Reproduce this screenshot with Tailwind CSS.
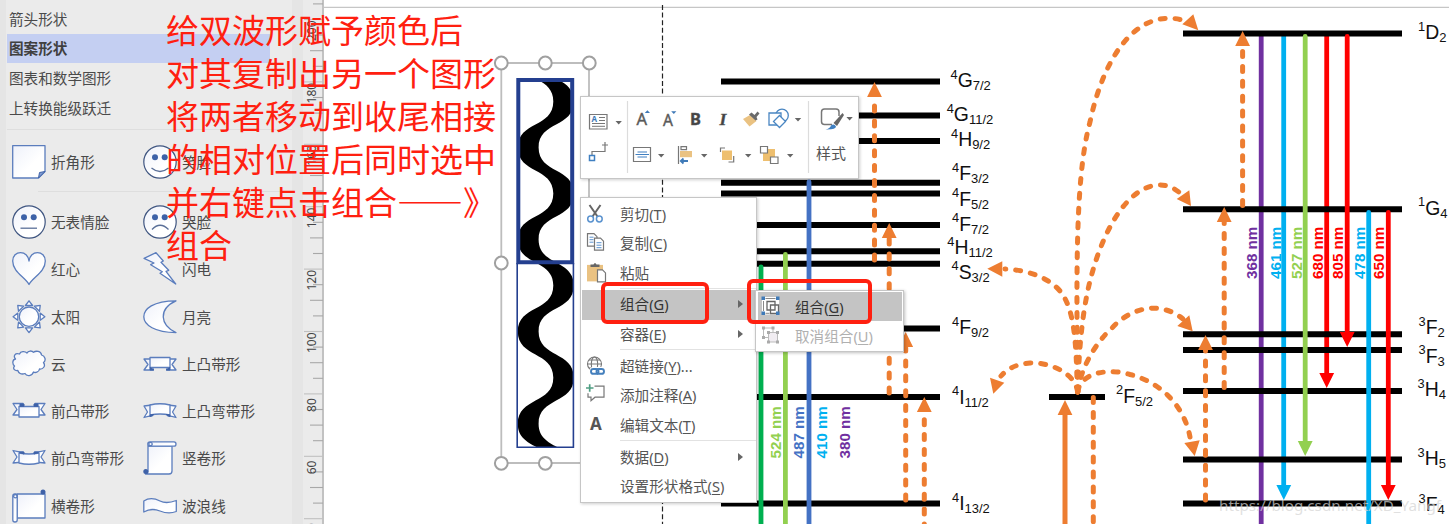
<!DOCTYPE html>
<html lang="zh-CN">
<head>
<meta charset="utf-8">
<title>Shapes editor</title>
<script src="https://cdn.jsdelivr.net/npm/@tailwindcss/browser@4"></script>
</head>
<body class="bg-white">
<main class="relative flex h-[524px] w-[1449px] overflow-hidden bg-white font-['Noto_Sans','Noto_Sans_CJK_SC',sans-serif] text-[14.6px] text-[#4a4a4a]">

  <!-- shape library -->
  <aside class="w-[303px] shrink-0 bg-[#e5e5e5] pl-[6px] pr-[11px]">
    <div class="h-full bg-[#ebebeb] pt-[5px] pl-px">
      <ul class="leading-[29px] whitespace-nowrap">
        <li class="h-[29px] pl-[2px]">箭头形状</li>
        <li class="h-[29px] w-[263px] bg-[#c4cff2] pl-[2px] font-bold text-[#404040]">图案形状</li>
        <li class="mt-px h-[29px] pl-[2px]">图表和数学图形</li>
        <li class="h-[30px] pl-[2px] leading-[30px]">上转换能级跃迁</li>
      </ul>
      <div class="mt-[6px] h-px bg-[#dedede]"></div>
      <div id="shapes" class="grid grid-cols-[131px_1fr] auto-rows-[47.3px] pl-[5px] whitespace-nowrap"></div>
    </div>
  </aside>

  <!-- vertical ruler -->
  <div class="w-[21px] shrink-0 bg-[#ebebeb]">
    <svg id="ruler" width="21" height="524" viewBox="303 0 21 524"></svg>
  </div>

  <!-- drawing canvas -->
  <section class="w-[1125px] shrink-0">
    <svg width="1125" height="524" viewBox="324 0 1125 524" font-family="Liberation Sans, Arial, sans-serif">
      <path d="M324 7.3H1449" stroke="#c6c6c6" stroke-width="1.2"/>
      <path d="M662.5 5V524" stroke="#222" stroke-width="1.2" stroke-dasharray="5 2.6"/>
      <path d="M501.3 63H589V463H501.3Z" fill="none" stroke="#bdbdbd" stroke-width="1.8"/>
      <clipPath id="wc"><path d="M517 80H574V447H517Z"/></clipPath>
      <g clip-path="url(#wc)">
        <path d="M517.8 55.5C517.8 82 553.3 75 553.3 101.5C553.3 128 517.8 121 517.8 147.5C517.8 174 553.3 167 553.3 193.5C553.3 220 517.8 213 517.8 239.5C517.8 266 553.3 259 553.3 285.5C553.3 312 517.8 305 517.8 331.5C517.8 358 553.3 351 553.3 377.7C553.3 404 517.8 397 517.8 423.7C517.8 450 553.3 443 553.3 469.7H573.8C573.8 443 538.6 450 538.6 423.7C538.6 397 573.8 404 573.8 377.7C573.8 351 538.6 358 538.6 331.5C538.6 305 573.8 312 573.8 285.5C573.8 259 538.6 266 538.6 239.5C538.6 213 573.8 220 573.8 193.5C573.8 167 538.6 174 538.6 147.5C538.6 121 573.8 128 573.8 101.5C573.8 75 538.6 82 538.6 55.5Z"/>
      </g>
      <path d="M517.2 263V447.2H573.4V263" fill="none" stroke="#243f8f" stroke-width="1.6"/>
      <path d="M518.3 80H572.2V262.2H518.3Z" fill="none" stroke="#243f8f" stroke-width="4"/>
      <g fill="#fff" stroke="#a0a0a0" stroke-width="2">
        <circle cx="501.3" cy="63" r="6.4"/><circle cx="545.3" cy="63" r="6.4"/><circle cx="589.3" cy="63" r="6.4"/>
        <circle cx="501.3" cy="263" r="6.4"/><circle cx="501.3" cy="463.3" r="6.4"/><circle cx="545.3" cy="463.3" r="6.4"/>
      </g>

      <g stroke-width="4.8" fill="none">
        <path d="M1261.2 36V524" stroke="#7030a0"/>
        <path d="M1283.7 36V488" stroke="#00b0f0"/>
        <path d="M1326.7 36V376" stroke="#f00"/>
      </g>
      <g id="levels" stroke="#000" stroke-width="6"></g>
      <g stroke-width="4.8" fill="none" stroke-linecap="round">
        <path d="M761 267V530" stroke="#00b050"/>
        <path d="M785.4 254.5V530" stroke="#92d050"/>
        <path d="M809 182V530" stroke="#4472c4"/>
        <path d="M1305.2 36.500V444" stroke="#92d050"/>
        <path d="M1347.2 36.500V335" stroke="#f00"/>
        <path d="M1368.7 212.500V530" stroke="#00b0f0"/>
        <path d="M1388.3 212.500V488" stroke="#f00"/>
      </g>
      <path d="M1276.400 485h14.800l-7.400 15z" fill="#00b0f0"/>
      <path d="M1297.800 441h14.800l-7.400 15z" fill="#92d050"/>
      <path d="M1319.300 373h14.800l-7.400 15z M1339.800 332h14.800l-7.400 15z M1380.900 485h14.800l-7.400 15z" fill="#f00"/>

      <g fill="none" stroke="#ed7d31" stroke-width="5" stroke-linecap="round" stroke-dasharray="5 9.9">
        <path d="M874.5 260V98"/><path d="M889.2 393V239"/><path d="M905.7 500V348"/><path d="M924.3 529V412"/>
        <path d="M1093.300 397.500V530"/>
        <path d="M1242.600 205.500V46"/><path d="M1224.200 387.500V222"/><path d="M1205.500 500V350"/>
        <path d="M1077.500 392C1077 290 1074 180 1090 122C1104 55 1138 6 1186 21"/>
        <path d="M1077.800 392C1079 340 1084 300 1093 270C1106 225 1130 185 1160 185C1168 185 1174 188 1180 193"/>
        <path d="M1077.800 392C1080 370 1095 343 1112 328C1130 308 1160 300 1183 319"/>
        <path d="M1077.800 392C1080 372 1110 368 1130 374.500C1160 382 1184 405 1190 437"/>
        <path d="M1077.800 392C1074 370 1045 362 1030 363C1015 364 1006 370 1001 376"/>
        <path d="M1077.500 392C1076 350 1076 310 1060 291C1047 276 1025 270 1005 269"/>
      </g>
      <path d="M1065 524V412" stroke="#ed7d31" stroke-width="5"/>
      <g fill="#ed7d31">
        <path d="M867.100 97h14.800l-7.400-15z M881.800 238h14.800l-7.400-15z M898.300 347h14.800l-7.400-15z M916.900 412h14.800l-7.400-15z M1057.600 415h14.800l-7.400-15z M1235.200 46h14.800l-7.400-15z M1216.800 222h14.800l-7.400-15z M1198.100 350h14.800l-7.400-15z"/>
        <path d="M1193.300 14.300L1198.300 30.300L1182.300 24.300Z M1189.300 190.300L1191 206L1176.700 199Z M1189.300 315.300L1192.700 331.300L1177.300 326Z M1199.700 440.300L1194.700 456L1184.300 443Z M990 377.700L1004.300 382.700L993.300 393.700Z M987.300 268.700L1002.300 261.300V276.700Z"/>
      </g>
      <g id="terms" font-size="19.400" fill="#111"></g>
      <g id="waves" font-size="15.200" font-weight="bold"></g>
      <text x="1219" y="511" font-family="Noto Sans, sans-serif" font-size="15.200" fill="#d4d4d4" fill-opacity=".72" textLength="222" lengthAdjust="spacingAndGlyphs">https://blog.csdn.net/XD_Yangf</text>
    </svg>
  </section>

  <!-- annotation -->
  <p class="absolute top-[8px] left-[166px] font-['Noto_Sans_CJK_SC',sans-serif] text-[33px] leading-[43px] whitespace-pre text-[#ff2010]">给双波形赋予颜色后
对其复制出另一个图形
将两者移动到收尾相接
的相对位置后同时选中
并右键点击组合——》
组合</p>

  <!-- mini toolbar -->
  <div class="absolute top-[96px] left-[580px] h-[83px] w-[279px] border border-[#c6c6c6] bg-white shadow-[1px_1px_3px_rgba(0,0,0,0.2)]">
    <svg width="277" height="81" viewBox="581 97 277 81" fill="none" stroke-width="1.2">
      <path d="M627.500 101V173M808.500 101V173" stroke="#dcdcdc"/>
      <g fill="#666"><path d="M615.500 121h6.400l-3.200 3.400z M794.800 118h6.400l-3.200 3.400z M846.400 117h6.400l-3.200 3.400z M658 154h6.400l-3.200 3.400z M701 154h6.400l-3.200 3.400z M745 154h6.400l-3.200 3.400z M787 154h6.400l-3.200 3.400z"/></g>
      <g stroke="#777"><path d="M589.500 114.500h17.500v14.500h-17.500z"/><path d="M599 117.500h6M599 120.500h6M592 123.500h13M592 126.300h13" stroke-width="1"/></g>
      <text x="591.500" y="122" font-size="8" font-weight="bold" fill="#3f7ab8" font-family="Noto Sans">A</text>
      <path d="M592 155V151.500H605V147.500M605 142v6M602 145h6" stroke="#777"/><path d="M589.500 155.500h5v5h-5z" stroke="#3f7fc1" stroke-width="1.500"/>
      <g font-family="Noto Sans" fill="#5a5a5a" stroke="#5a5a5a" stroke-width=".4">
        <text x="636.500" y="125" font-size="16.500">A</text><text x="663" y="126" font-size="15.500">A</text>
        <text x="690" y="125" font-size="16.500" font-weight="bold" fill="#444">B</text>
        <text x="719.500" y="125" font-size="17.500" font-weight="bold" font-style="italic" font-family="Liberation Serif" fill="#444">I</text>
      </g>
      <path d="M644.800 113h5.200l-2.600-2.800z M671.200 111.200h5.200l-2.600 2.800z" fill="#3f7ab8"/>
      <path d="M743 119L750 115L756.500 121L749.500 126.500Z" fill="#eac282"/><path d="M749 114.500L751.500 112.500L754.500 115L757.500 111.500L759.500 113.500L756.500 117L757.500 119.500L755.500 120.500Z" fill="#6a6a6a"/>
      <g stroke="#4a86c2" stroke-width="1.300" fill="#fff"><circle cx="782" cy="115.500" r="6.300"/><path d="M769 113h12v12h-12z"/><path d="M779.500 115.500l6 6l-6 6l-6-6z"/></g>
      <path d="M832 124.500H824.500Q821.500 124.500 821.500 121.500V112Q821.500 109 824.500 109H836Q839 109 839 112V116" stroke="#777" stroke-width="1.500"/>
      <path d="M842.500 113L844 115L837 126L833.500 123Z" fill="#666"/><path d="M825.500 129.500Q830 128.500 831 125.500Q834 123 836 126.500Q836 129.800 825.500 129.500Z" fill="#3f7fc1"/>
      <path d="M633.500 147.500h17v14h-17z" stroke="#777"/><path d="M637.500 152h9.500M635.500 154.500h13.500M637.500 157h9.500" stroke="#3f7fc1"/>
      <path d="M678.500 146V164M681 146.700h5.500v3h-5.500z" stroke="#777"/><path d="M680 151h12v6.200h-12z" fill="#eac282"/><path d="M688 161h-6M683.500 158.500l-2.700 2.500l2.700 2.500" stroke="#3f7ab8" stroke-width="1.800"/>
      <path d="M722 150.500h10v9.500h-10z" fill="#eebf6f"/><path d="M720.500 152V148h4.500M728.500 162h5.200V156" stroke="#777"/>
      <path d="M763 149h12v12h-12z" fill="#eebf6f"/><path d="M760.500 146.500h7v6.500h-7z M770.500 157h7.500v6.500h-7.500z" stroke="#777" fill="#fff"/>
    </svg>
    <span class="absolute top-[46px] left-[235px] text-[15px] leading-[20px] text-[#555]">样式</span>
  </div>

  <!-- context menu -->
  <nav class="absolute top-[197px] left-[580px] flex h-[306px] w-[177px] flex-col border border-[#c6c6c6] bg-white pt-[2px] pl-px leading-[29px] whitespace-nowrap text-[#555] shadow-[1px_1px_3px_rgba(0,0,0,0.2)]">
    <div class="flex h-[29.3px]"><svg class="w-[38px]" viewBox="582 200 38 29.300" fill="none"><path d="M589.500 205L597.500 216.500M600.500 205L592.500 216.500" stroke="#666" stroke-width="2"/><circle cx="590.600" cy="219" r="2.900" stroke="#5b93cf" stroke-width="1.500"/><circle cx="599.300" cy="219" r="2.900" stroke="#5b93cf" stroke-width="1.500"/></svg>剪切(<u class="underline-offset-2">T</u>)</div>
    <div class="flex h-[29.3px]"><svg class="w-[38px]" viewBox="582 229.300 38 29.300" fill="#fff"><path d="M587.500 234h6.500l3 3v9.500h-9.500z" stroke="#777" stroke-width="1.200"/><path d="M589.500 237.500h4M589.500 240h4M589.500 242.500h4" stroke="#5b93cf"/><path d="M594.500 238.500h6l3 3v9h-9z" stroke="#777" stroke-width="1.200"/><path d="M596.500 243h5M596.500 245.500h5M596.500 248h5" stroke="#5b93cf"/></svg>复制(<u class="underline-offset-2">C</u>)</div>
    <div class="flex h-[29.3px]"><svg class="w-[38px]" viewBox="582 258.600 38 29.300"><path d="M587 264.500h16v16.500h-16z" fill="#eac282"/><path d="M590.500 266.500v-2.500h3q1.500-3 3 0h3v2.500z" fill="#666"/><path d="M597.500 269.500h5l3 3v9h-8z" fill="#fff" stroke="#777" stroke-width="1.200"/></svg>粘贴</div>
    <div class="ml-[38px] h-[2.500px] border-t border-[#e2e2e2]"></div>
    <div class="relative flex h-[29.3px] bg-[#c4c4c4] pl-[38px] text-[#333]">组合(<u class="underline-offset-2">G</u>)<i class="absolute top-[10px] left-[156px] border-y-[4px] border-l-[5px] border-y-transparent border-l-[#666]"></i></div>
    <div class="relative flex h-[29.3px] pl-[38px]">容器(<u class="underline-offset-2">E</u>)<i class="absolute top-[10px] left-[156px] border-y-[4px] border-l-[5px] border-y-transparent border-l-[#666]"></i></div>
    <div class="ml-[38px] h-[3px] border-t border-[#e2e2e2]"></div>
    <div class="flex h-[29.3px]"><svg class="w-[38px]" viewBox="582 352 38 29.300" fill="none"><g stroke="#777" stroke-width="1.100"><circle cx="594.500" cy="364" r="7"/><ellipse cx="594.500" cy="364" rx="3.200" ry="7"/><path d="M587.500 364h14M589 360h11M589 368h11"/></g><g stroke="#fff" stroke-width="4.500"><rect x="591.500" y="369" width="7" height="4.500" rx="2.200"/><rect x="597" y="369" width="7" height="4.500" rx="2.200"/></g><g stroke="#4580bd" stroke-width="1.900"><rect x="591" y="369" width="7.500" height="4.800" rx="2.400"/><rect x="596.500" y="369" width="7.500" height="4.800" rx="2.400"/></g></svg>超链接(<u class="underline-offset-2">Y</u>)...</div>
    <div class="flex h-[29.3px]"><svg class="w-[38px]" viewBox="582 381.300 38 29.300" fill="none"><path d="M594.500 386.500H604V397.500H595L591 401V397.500H588V393.500" stroke="#777" stroke-width="1.200"/><path d="M589.700 384.500v7.500M586 388.300h7.500" stroke="#4f9e83" stroke-width="1.700"/></svg>添加注释(<u class="underline-offset-2">A</u>)</div>
    <div class="flex h-[29.3px]"><span class="w-[38px] pl-[8px] text-[17px] leading-[25px] font-bold">A</span>编辑文本(<u class="underline-offset-2">T</u>)</div>
    <div class="ml-[38px] h-[3px] border-t border-[#e2e2e2]"></div>
    <div class="relative flex h-[29.3px] pl-[38px]">数据(<u class="underline-offset-2">D</u>)<i class="absolute top-[10px] left-[156px] border-y-[4px] border-l-[5px] border-y-transparent border-l-[#666]"></i></div>
    <div class="flex h-[29.3px] pl-[38px]">设置形状格式(<u class="underline-offset-2">S</u>)</div>
  </nav>

  <!-- submenu -->
  <nav class="absolute top-[290px] left-[755px] h-[62px] w-[149px] border border-[#c6c6c6] bg-white py-px pr-px pl-[2px] leading-[30px] whitespace-nowrap shadow-[1px_1px_3px_rgba(0,0,0,0.25)]">
    <div class="flex h-[29px] bg-[#c4c4c4] text-[#333]"><svg class="w-[37px]" viewBox="758 292 37 29" fill="none"><path d="M762 297h17v17.500h-17z" fill="#fff"/><path d="M767 301.500h8v8.500h-8z M770.500 305h8v8.500h-8z" stroke="#666" stroke-width="1.300"/><path d="M765.500 298.500h10M765.500 313.300h4M763.500 301v10" stroke="#888"/><path d="M761.500 296.500h3.500v3.500h-3.500z M776 296.500h3.500v3.500h-3.500z M761.500 311.500h3.500v3.500h-3.500z M776 311.500h3.500v3.500h-3.500z" fill="#3f7ab8"/></svg>组合(<u class="underline-offset-2">G</u>)</div>
    <div class="flex h-[29px] text-[#b0b0b0]"><svg class="w-[37px]" viewBox="758 321 37 29" fill="none"><path d="M763.500 328h9.500v9.500h-9.500z" stroke="#bbb"/><path d="M768.500 332.500h9v9.500h-9z" fill="#f1edf2" stroke="#bbb"/><path d="M762 326.500h3v3h-3z M771.500 326.500h3v3h-3z M762 336h3v3h-3z M767 331h3v3h-3z M776 331h3v3h-3z M767 340.500h3v3h-3z M776 340.500h3v3h-3z" fill="#aaa"/></svg>取消组合(<u class="underline-offset-2">U</u>)</div>
  </nav>

  <div class="absolute top-[282px] left-[601px] h-[42px] w-[108px] rounded-[6px] border-4 border-[#ff2010]"></div>
  <div class="absolute top-[279px] left-[747px] h-[45px] w-[125px] rounded-[6px] border-4 border-[#ff2010]"></div>
</main>

<script>
const S = 'fill="url(#pg)" stroke="#5b7dbd" stroke-width="1.300" stroke-linejoin="round"';
const eyes = '<circle cx="12" cy="12.300" r="3" fill="#3d62a8"/><circle cx="21.700" cy="12.300" r="3" fill="#3d62a8"/>';
const face = m => `<circle cx="17" cy="17" r="16.200" fill="url(#pg)" stroke="#3f5580" stroke-width="1.200"/>${eyes}<path d="${m}" fill="none" stroke="#5a6f98" stroke-width="1.300"/>`;
const tri = [0,45,90,135,180,225,270,315].map(a => `<path d="M17 .8L20.600 5.500H13.400Z" transform="rotate(${a} 17 16.700)" ${S}/>`).join('');
const items = [
  ['折角形', `<path d="M.7.7H33V26.500L26.500 33H.7Z" ${S}/><path d="M26.500 33L27.500 27.500L33 26.500Z" fill="#7f9bd0" stroke="#3f62a8"/>`],
  ['笑脸', face('M8.500 23Q17 30 25.500 23')],
  ['无表情脸', face('M8.500 23.200H25')],
  ['哭脸', face('M9 24.500Q17 16 25.500 24.500')],
  ['红心', `<path d="M17 32.500C13 25 .7 20 .7 9C.7 3.500 4.500 .7 8.500 .7C13 .7 16.600 4 17 9C17.400 4 21 .7 25.500 .7C29.500 .7 33.300 3.500 33.300 9C33.300 20 21 25 17 32.500Z" ${S}/>`],
  ['闪电', `<path d="M1 6.300L13 .7L20.300 9L18 10.300L25.700 18.300L23 19.300L32.700 32L17 21.300L19.300 19.700L7.700 12.700L11 11Z" ${S}/>`],
  ['太阳', tri + `<circle cx="17" cy="16.700" r="9.700" ${S}/>`],
  ['月亮', `<path d="M33 .8C10 .8 .8 9 .8 16.700C.8 25 12 32.500 33 32.500C17 25 15 9 33 .8Z" ${S}/>`],
  ['云', `<path d="M3.500 12C1 9 3 5.500 7.500 7C8.500 4 13 4 15 6C16 3.500 20 3.500 21.500 5.300C24 3.500 29 4 29.500 8C33 9 34.500 13 31.500 15.500C34 19 31 22.500 27.500 22C27 25.500 23 26 21.500 25C20 29.500 14.500 29.500 13 26.500C9 28 6.500 26 5.800 23.500C2.500 24 .5 21.500 2.500 19C0 17 .3 12.500 3.500 12Z" ${S}/>`],
  ['上凸带形', `<path d="M1 12H10V23H1L5 17.500Z M33 12H24V23H33L29 17.500Z" ${S}/><path d="M7 10.500H27V20.500H7Z" ${S}/><path d="M7 20.500V23H11Z M27 20.500V23H23Z" fill="#3f62a8" stroke="#3f62a8"/>`],
  ['前凸带形', `<path d="M1 9.500H11V21H1L5 15.500Z M33 9.500H23V21H33L29 15.500Z" ${S}/><path d="M7 12.500H27V23H7Z" ${S}/><path d="M8 10H12V12.300H8Z M26 10H22V12.300H26Z" fill="#3f62a8" stroke="#3f62a8"/>`],
  ['上凸弯带形', `<path d="M1 12L9 11V22Q5 22 1 23.500L4.500 18Z M33 12L25 11V22Q29 22 33 23.500L29.500 18Z" ${S}/><path d="M7 11Q17 8.500 27 11V21Q17 19 7 21Z" ${S}/><path d="M7 21V22.500L11 20.500Z M27 21V22.500L23 20.500Z" fill="#3f62a8" stroke="#3f62a8"/>`],
  ['前凸弯带形', `<path d="M1 9.500Q6 11 11 11V21L1 22L5 16Z M33 9.500Q28 11 23 11V21L33 22L29 16Z" ${S}/><path d="M7 12Q17 14 27 12V22Q17 24.500 7 22Z" ${S}/><path d="M7.500 11.500L12 11V13Z M26.500 11.500L22 11V13Z" fill="#3f62a8" stroke="#3f62a8"/>`],
  ['竖卷形', `<path d="M5 5V30Q5 33 2.500 33H26Q29 33 29 30V5Z" ${S}/><path d="M7 .8H31Q33 .8 33 3T31 5.200H7Q4.800 5.200 4.800 3T7 .8Z" ${S}/><circle cx="7.500" cy="3" r="1.700" ${S}/><circle cx="2.800" cy="30.500" r="2.500" fill="#3f62a8"/>`],
  ['横卷形', `<path d="M5 5H33V29H5Z" ${S}/><path d="M.8 7Q.8 5 3 5T5.200 7V31Q5.200 33 3 33T.8 31Z" ${S}/><circle cx="3.300" cy="7.200" r="1.700" ${S}/><circle cx="31" cy="3" r="2.500" fill="#3f62a8"/>`],
  ['波浪线', `<path d="M.8 12C7 8 13 10 17 12C22 14.500 28 13.500 33.300 11.500V22.500C27 25 22 24 17 22C12 20 6 20 .8 23Z" ${S}/>`]
];
document.getElementById('shapes').innerHTML =
  '<svg class="absolute size-0"><linearGradient id="pg" x1="0" y1="0" x2="1" y2="1"><stop offset="0" stop-color="#eef1fa"/><stop offset=".6" stop-color="#fff"/></linearGradient></svg>' +
  items.map(([t, d], i) => `<div class="flex items-center gap-[5px] ${i < 2 ? 'h-[64px]' : 'h-[47.3px]'}"><svg class="shrink-0" width="34" height="34" viewBox="0 0 34 34">${d}</svg><span class="pt-[2px]">${t}</span></div>` +
    (i === 1 ? '<div class="col-span-2 mt-[14px] ml-[26px] h-px bg-[#dedede]"></div>' : '')).join('');
document.getElementById('shapes').style.gridTemplateRows = '47.3px 21px';

let r = '<path d="M323 0V524" stroke="#b4b4b4" stroke-width="1.500"/>';
for (let k = 0; k < 34; k++) {
  const y = 3.900 + k * 15.600, m = (k + 3) % 4;
  r += `<path d="M${m === 0 ? 304 : m === 2 ? 310 : 313} ${y}H323" stroke="${m === 0 ? '#c0c0c0' : '#a8a8a8'}" stroke-width="1.100"/>`;
}
[200,180,160,140,120,100,80,60,40].forEach((n, i) => {
  r += `<text transform="translate(315.500 ${30.700 + i * 62.400}) rotate(-90)" text-anchor="middle" font-size="12" fill="#444" font-family="Noto Sans">${n}</text>`;
});
document.getElementById('ruler').innerHTML = r;

const left = [81.500,115.500,141,182.700,193.600,225,251.300,263.700,328.500,397,503.500];
const right = [33.600,209.300,334.300,350,391,459.500,503.500];
document.getElementById('levels').innerHTML =
  left.map(y => `<path d="M721 ${y}H940"/>`).join('') + right.map(y => `<path d="M1183 ${y}H1402"/>`).join('') + '<path d="M1049 397H1105"/>';

document.getElementById('terms').innerHTML = [
  [950.500,87,'4','G','7/2'],[946.700,121,'4','G','11/2'],[951,146,'4','H','9/2'],[952,180,'4','F','3/2'],[952,205.700,'4','F','5/2'],
  [952,230.700,'4','F','7/2'],[947.300,254,'4','H','11/2'],[951.500,278.500,'4','S','3/2'],[952,334,'4','F','9/2'],[952,403.500,'4','I','11/2'],
  [952,510,'4','I','13/2'],[1116,402.700,'2','F','5/2'],[1418,39,'1','D','2'],[1418,214.500,'1','G','4'],[1418.500,334,'3','F','2'],
  [1418.500,362.500,'3','F','3'],[1417.500,396,'3','H','4'],[1417.500,465,'3','H','5'],[1418.500,511,'3','F','4']
].map(([x,y,a,b,c]) => `<text x="${x}" y="${y}"><tspan font-size="12.800" dy="-8.400">${a}</tspan><tspan dy="8.400">${b}</tspan><tspan font-size="13" dy="3">${c}</tspan></text>`).join('');

document.getElementById('waves').innerHTML = [
  [781,458.500,'524','#92d050'],[803.700,458.500,'487','#4472c4'],[827,458.500,'410','#00b0f0'],[850.300,458.500,'380','#7030a0'],
  [1256.700,279,'368','#7030a0'],[1280.700,279,'461','#00b0f0'],[1302,279,'527','#92d050'],[1322.700,279,'680','#ff0000'],
  [1343.300,279,'805','#ff0000'],[1365,279,'478','#00b0f0'],[1384,279,'650','#ff0000']
].map(([x,y,t,c]) => `<text transform="translate(${x} ${y}) rotate(-90)" fill="${c}">${t} nm</text>`).join('');
</script>
</body>
</html>
